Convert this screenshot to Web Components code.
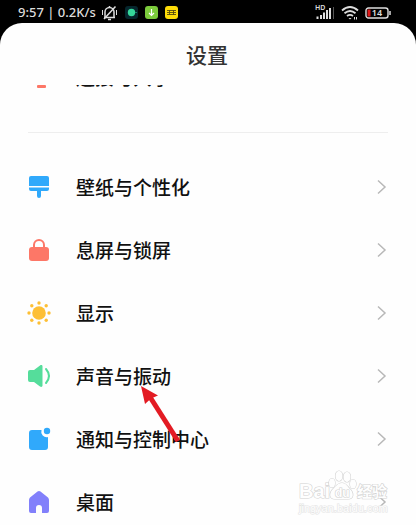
<!DOCTYPE html>
<html lang="zh-CN">
<head>
<meta charset="utf-8">
<meta name="viewport" content="width=device-width, initial-scale=1">
<title>设置</title>
<style>
    body {
        margin: 0;
        background: #000;
        font-family: "Noto Sans", "Noto Sans CJK SC", sans-serif;
    }
</style>
</head>
<body>
<settings-screen>
    <status-bar slot="status"></status-bar>
    <setting-item icon="link">连接与共享</setting-item>
    <setting-divider></setting-divider>
    <setting-item icon="brush">壁纸与个性化</setting-item>
    <setting-item icon="lock">息屏与锁屏</setting-item>
    <setting-item icon="sun">显示</setting-item>
    <setting-item icon="sound">声音与振动</setting-item>
    <setting-item icon="notice">通知与控制中心</setting-item>
    <setting-item icon="home">桌面</setting-item>
    <tap-pointer slot="overlay"></tap-pointer>
    <site-mark slot="overlay"></site-mark>
</settings-screen>

<script>
const ICONS = {
    link: `<rect x="4" y="4" width="14" height="13" rx="3" fill="#fd7767"/>
        <rect x="9" y="19" width="9" height="3" rx="1" fill="#fd7767"/>`,
    brush: `<path d="M3 0h16a2 2 0 0 1 2 2v8H1V2a2 2 0 0 1 2-2z" fill="#30a9fb"/>
        <path d="M1 11.500h20v1.500a2 2 0 0 1-2 2h-6v5a2 2 0 0 1-4 0v-5H3a2 2 0 0 1-2-2z" fill="#30a9fb"/>`,
    lock: `<path d="M6 9V6a5 5 0 0 1 10 0v3" fill="none" stroke="#fd7767" stroke-width="2"/>
        <rect x="1" y="8" width="20" height="14" rx="3" fill="#fd7767"/>`,
    sun: `<g fill="#fdbf35"><circle cx="11" cy="11" r="6.800"/>
        <circle cx="11" cy="1" r="1.700"/><circle cx="11" cy="21" r="1.700"/>
        <circle cx="1" cy="11" r="1.700"/><circle cx="21" cy="11" r="1.700"/>
        <circle cx="3.800" cy="3.800" r="1.700"/><circle cx="18.200" cy="3.800" r="1.700"/>
        <circle cx="3.800" cy="18.200" r="1.700"/><circle cx="18.200" cy="18.200" r="1.700"/></g>`,
    sound: `<path d="M2 5h4l6-4.600c1.200-.8 2.500-.4 2.500 1v19.200c0 1.400-1.300 1.800-2.500 1L6 17H2a2 2 0 0 1-2-2V7a2 2 0 0 1 2-2z" fill="#55dd9b"/>
        <path d="M18 4q6 7 0 14" fill="none" stroke="#55dd9b" stroke-width="2" stroke-linecap="round"/>`,
    notice: `<path d="M4 2h9.500a5.500 5.500 0 0 0 6.500 7v10a3 3 0 0 1-3 3H4a3 3 0 0 1-3-3V5a3 3 0 0 1 3-3z" fill="#30a9fb"/>
        <circle cx="19" cy="3" r="3.200" fill="#30a9fb"/>`,
    home: `<path d="M9.500.5q1.500-1 3 0L20 6.500q1 1 1 2.500v11q0 2-2 2h-5v-5a3 3 0 0 0-6 0v5H3q-2 0-2-2V9q0-1.500 1-2.500z" fill="#8280fb"/>`
};

class SettingsScreen extends HTMLElement {
    constructor () {
        super();
        this.root = this.attachShadow({mode: 'open'});
        this.root.innerHTML = `
            <style>
                :host {
                    display: flex;
                    flex-direction: column;
                    position: relative;
                    height: 100vh;
                    overflow: hidden;
                }
                main {
                    flex: 1;
                    min-height: 0;
                    display: flex;
                    flex-direction: column;
                    border-radius: 22px 22px 0 0;
                    background: #fefefe;
                    overflow: hidden;
                }
                h1 {
                    margin: 0;
                    flex: none;
                    padding: 2px 2px 0 0;
                    line-height: 60px;
                    font-size: 21px;
                    font-weight: 500;
                    text-align: center;
                    color: #333;
                }
                .list {
                    flex: 1;
                    min-height: 0;
                    overflow: hidden;
                }
                /* the list is scrolled part of a row */
                .scrolled {
                    margin-top: -40px;
                }
            </style>
            <slot name="status"></slot>
            <main>
                <h1>设置</h1>
                <div class="list"><div class="scrolled"><slot></slot></div></div>
            </main>
            <slot name="overlay"></slot>
        `;
    }
}

class StatusBar extends HTMLElement {
    constructor () {
        super();
        this.root = this.attachShadow({mode: 'open'});
        this.root.innerHTML = `
            <style>
                :host {
                    display: flex;
                    flex: none;
                    justify-content: space-between;
                    height: 23px;
                    padding: 0 25px 0 18px;
                    color: #ddd;
                    font-size: 13px;
                    font-weight: 500;
                    line-height: 24px;
                }
                div {
                    display: flex;
                    align-items: center;
                }
                .left { gap: 7px; }
                .right { gap: 6px; }
                .time { margin-right: -2px; white-space: nowrap; }
                svg { display: block; flex: none; margin-top: 2px; overflow: visible; }
            </style>
            <div class="left">
                <span class="time">9:57 | 0.2K/s</span>
                <svg width="17" height="16" viewBox="0 0 17 16" fill="none" stroke="#ddd">
                    <path d="M4 12V7a4.500 4.500 0 0 1 9 0v5M3 12.500h11" stroke-width="1.500"/>
                    <path d="M7 14.500h3M8.500 1v2" stroke-width="1.500"/>
                    <path d="M3 14 14.500 1.500" stroke-width="1.500"/>
                    <path d="M1.500 5v5M15.500 5v5"/>
                </svg>
                <svg width="13" height="13" viewBox="0 0 13 13">
                    <rect width="13" height="13" rx="3" fill="#06262d"/>
                    <circle cx="6.500" cy="6.500" r="3.700" fill="#35d69a"/>
                    <path d="M10 6.500h2" stroke="#168568"/>
                </svg>
                <svg width="13" height="13" viewBox="0 0 13 13">
                    <rect width="13" height="13" rx="3" fill="#7ccb3c"/>
                    <path d="M6.500 3v6.500M4 7l2.500 2.500L9 7" fill="none" stroke="#fff" stroke-width="1.200"/>
                </svg>
                <svg width="13" height="13" viewBox="0 0 13 13">
                    <rect width="13" height="13" rx="3" fill="#fddc08"/>
                    <path d="M2 4.500h9M2 6.500h9M2 8.500h9M4.500 4v5M8.500 4v5" stroke="#574b0c" stroke-width=".9"/>
                </svg>
            </div>
            <div class="right">
                <svg width="20" height="14" viewBox="0 0 20 14">
                    <text x="0" y="4" font-size="7" font-weight="600" fill="#ddd">HD</text>
                    <path d="M2.500 10.500V13M6 9v4M9 6.500V13M12 4v9M15 2v11" stroke="#ddd" stroke-width="2"/>
                    <path d="M18.500 1v12" stroke="#555"/>
                </svg>
                <svg width="18" height="14" viewBox="0 0 18 14" fill="none" stroke="#ddd" stroke-width="1.800">
                    <path d="M1 4.500q8-7 16 0M3.500 7.300q5.500-4.600 11 0M6 10q3-2.200 6 0"/>
                    <path d="M7.500 12h3L9 13.500z" fill="#ddd" stroke="none"/>
                    <path d="M13.500 11v2.500M15.500 11v2.500" stroke-width="1"/>
                </svg>
                <svg width="26" height="12" viewBox="0 0 26 12">
                    <rect x="1" y="1" width="22" height="10" rx="2.500" fill="none" stroke="#ddd" stroke-width="1.400"/>
                    <path d="M25 4v4" stroke="#ddd" stroke-width="1.500"/>
                    <rect x="2.500" y="2.500" width="3" height="7" fill="#e01a1a"/>
                    <text x="12" y="9" font-size="9" font-weight="600" text-anchor="middle" fill="#ddd">14</text>
                </svg>
            </div>
        `;
    }
}

class SettingItem extends HTMLElement {
    constructor () {
        super();
        this.root = this.attachShadow({mode: 'open'});
    }

    connectedCallback () {
        this.root.innerHTML = `
            <style>
                :host {
                    display: block;
                }
                a {
                    display: flex;
                    align-items: center;
                    height: 63px;
                    padding: 0 28px;
                    color: #111;
                    font-size: 19px;
                    font-weight: 500;
                    text-decoration: none;
                }
                svg { display: block; flex: none; overflow: visible; }
                span { flex: 1; margin-left: 26px; }
            </style>
            <a href="#${this.getAttribute('icon')}">
                <svg width="22" height="22" viewBox="0 0 22 22" aria-hidden="true">${ICONS[this.getAttribute('icon')]}</svg>
                <span><slot></slot></span>
                <svg width="10" height="16" viewBox="0 0 10 16" aria-hidden="true">
                    <path d="M0 1.500 7 8l-7 6.500" fill="none" stroke="#b8b8b8" stroke-width="1.500"/>
                </svg>
            </a>
        `;
    }
}

class SettingDivider extends HTMLElement {
    constructor () {
        super();
        this.root = this.attachShadow({mode: 'open'});
        this.root.innerHTML = `
            <style>
                :host {
                    display: block;
                    height: 1px;
                    margin: 24px 28px 22px;
                    background: #eee;
                }
            </style>
        `;
    }
}

class TapPointer extends HTMLElement {
    constructor () {
        super();
        this.root = this.attachShadow({mode: 'open'});
        this.root.innerHTML = `
            <style>
                :host {
                    position: absolute;
                    left: 140px;
                    top: 385px;
                    pointer-events: none;
                }
                svg { display: block; }
            </style>
            <svg width="42" height="58" viewBox="0 0 42 58">
                <path d="M10 12 38 56" stroke="#e31b23" stroke-width="5"/>
                <path d="M1 1 18 10.500 11 13.500 5 19z" fill="#e31b23"/>
            </svg>
        `;
    }
}

class SiteMark extends HTMLElement {
    constructor () {
        super();
        this.root = this.attachShadow({mode: 'open'});
        this.root.innerHTML = `
            <style>
                :host {
                    position: absolute;
                    right: 26px;
                    bottom: 8px;
                    pointer-events: none;
                }
                svg { display: block; overflow: visible; }
                text, path, ellipse {
                    fill: #fefefe;
                    stroke: #d2d2d2;
                    stroke-width: 1.200px;
                    paint-order: stroke;
                }
                .url { stroke: #e4e4e4; }
            </style>
            <svg width="92" height="46" viewBox="0 0 92 46" font-family="Liberation Sans, Noto Sans CJK SC, sans-serif">
                <text x="1" y="27" font-size="20" font-weight="700">Bai</text>
                <ellipse cx="34" cy="12" rx="3" ry="4.500"/>
                <ellipse cx="41" cy="5" rx="3.500" ry="5"/>
                <ellipse cx="49" cy="6" rx="3.500" ry="5"/>
                <ellipse cx="55" cy="13" rx="3" ry="4.500"/>
                <path d="M44 12c4 0 5 3 8 6 4 4 4 10-2 10H37c-6 0-6-6-2-10 3-3 5-6 9-6z"/>
                <text x="37" y="26" font-size="12" font-weight="700">du</text>
                <text x="59" y="26" font-size="15" font-weight="700">经验</text>
                <text class="url" x="1" y="41" font-size="11">jingyan.baidu.com</text>
            </svg>
        `;
    }
}

customElements.define('status-bar', StatusBar);
customElements.define('setting-item', SettingItem);
customElements.define('setting-divider', SettingDivider);
customElements.define('tap-pointer', TapPointer);
customElements.define('site-mark', SiteMark);
customElements.define('settings-screen', SettingsScreen);
</script>
</body>
</html>
